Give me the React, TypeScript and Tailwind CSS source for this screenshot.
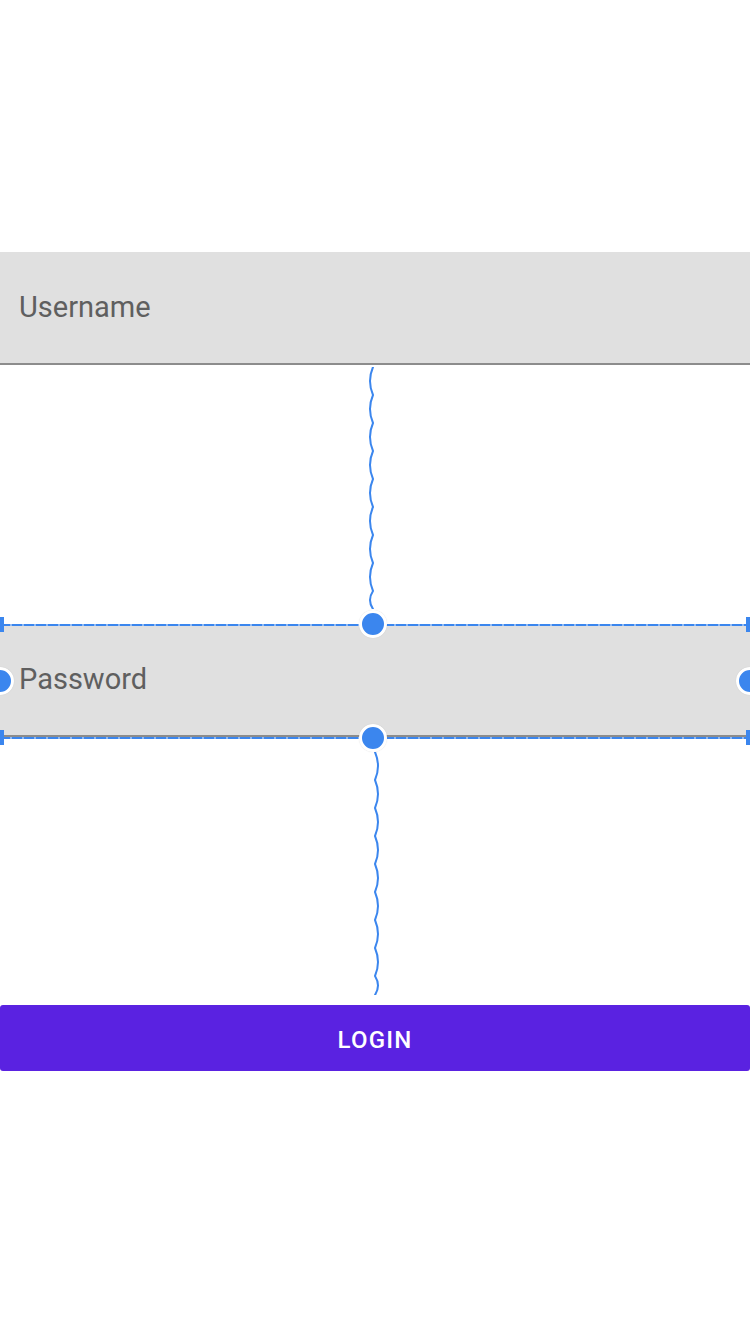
// Login layout preview — two filled fields, constraint overlay on the password field, login button.
const BLUE = "#3b86ee";
const DASH = "bg-[repeating-linear-gradient(90deg,#3b86ee_0_10px,#8fbaf5_10px_12px)]";

// scalloped "spring" line used by the layout editor for constraints
function wavePath(x: number, len: number, side: number, period = 28) {
  let d = `M ${x} 0`;
  for (let y = 0; y < len; y += period) {
    const end = Math.min(y + period, len);
    d += ` Q ${x + side * 6} ${(y + end) / 2} ${x} ${end}`;
  }
  return d;
}

function Wave({ height, side }: { height: number; side: number }) {
  return (
    <svg width="12" height={height} viewBox={`0 0 12 ${height}`} className="block">
      <path d={wavePath(6, height, side)} fill="none" stroke={BLUE} strokeWidth="2" strokeLinecap="round" />
    </svg>
  );
}

function Handle() {
  return (
    <div className="h-[28px] w-[28px] rounded-full border-[3px] border-white bg-[#3b86ee] shadow-[0_0_1px_rgba(0,0,0,0.15)]" />
  );
}

function Field({ label }: { label: string }) {
  return (
    <div className="flex h-[113px] items-center border-b-2 border-[#8c8c8c] bg-[#e0e0e0] px-[19px] pt-[1px]">
      <span className="text-[29px] text-[#5f5f5f]">{label}</span>
    </div>
  );
}

export default function App() {
  return (
    <div
      className="flex min-h-[1332px] flex-col overflow-hidden bg-white pt-[252px]"
      style={{ fontFamily: "Roboto, 'Noto Sans', sans-serif" }}
    >
      <Field label="Username" />

      <div className="flex h-[259px] justify-center pt-[2px] pr-[5px]">
        <Wave height={242} side={-1} />
      </div>

      <div className="relative">
        <Field label="Password" />
        {/* selection overlay */}
        <div className={`absolute left-0 right-0 top-0 h-[2px] ${DASH}`} />
        <div className={`absolute left-0 right-0 top-[113px] h-[2px] ${DASH}`} />
        <div className="absolute left-0 top-[-7px] h-[15px] w-[4px] bg-[#3b86ee]" />
        <div className="absolute left-0 top-[106px] h-[15px] w-[4px] bg-[#3b86ee]" />
        <div className="absolute right-0 top-[-7px] h-[15px] w-[4px] bg-[#3b86ee]" />
        <div className="absolute right-0 top-[106px] h-[15px] w-[4px] bg-[#3b86ee]" />
        <div className="absolute left-[359px] top-[-14px]">
          <Handle />
        </div>
        <div className="absolute left-[359px] top-[100px]">
          <Handle />
        </div>
        <div className="absolute left-[-14px] top-[43px]">
          <Handle />
        </div>
        <div className="absolute right-[-14px] top-[43px]">
          <Handle />
        </div>
      </div>

      <div className="flex h-[268px] justify-center pt-[15px] pr-[1px]">
        <Wave height={243} side={1} />
      </div>

      <button className="flex h-[66px] w-full items-center justify-center rounded-[3px] bg-[#5a22e1] pt-[4px] text-[24px] font-medium tracking-[0.05em] text-white">
        LOGIN
      </button>
    </div>
  );
}
